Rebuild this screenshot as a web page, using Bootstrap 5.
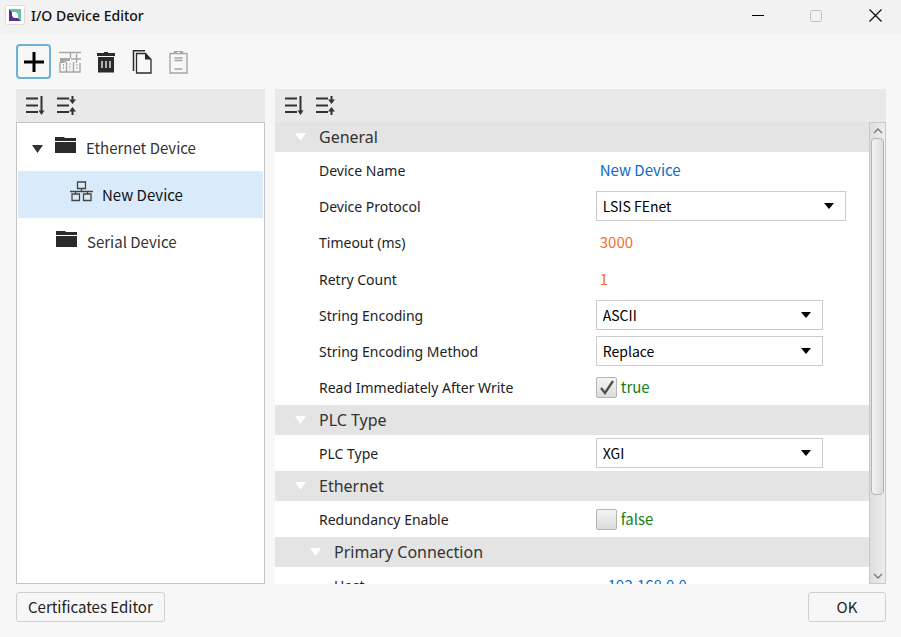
<!DOCTYPE html>
<html lang="en">
<head>
<meta charset="utf-8">
<meta name="viewport" content="width=device-width, initial-scale=1">
<title>I/O Device Editor</title>
<link href="https://cdn.jsdelivr.net/npm/bootstrap@5.3.0/dist/css/bootstrap.min.css" rel="stylesheet">
<style>
:root { --ui: "Noto Sans", "Open Sans", sans-serif; --cjk: "Noto Sans CJK KR", "Noto Sans", sans-serif; }
body { background: #f7f7f7; color: #222; font-family: var(--cjk); font-size: 15px; line-height: 20px; }
svg { display: block; }
.titlebar { background: #f2f2f2; height: 34px; padding: 0 0 3px 5px; }
.titlebar h1 { font-family: var(--ui); font-size: 14px; line-height: 20px; color: #111; }
.brand { gap: 5px; }
.win-btn { width: 58px; height: 31px; padding: 0; border: 0; background: none; display: flex; align-items: center; justify-content: center; }
.win-btn:last-child { width: 56px; padding-left: 4px; }
.tool-btn { width: 36px; height: 36px; padding: 0; border: 2px solid transparent; border-radius: 4px; background: none; display: flex; align-items: center; justify-content: center; }
.tool-btn.active-tool { border-color: #6fb0d6; width: 35px; height: 35px; margin-right: 1px; }
.tools { padding: 10px 16px 9px; height: 55px; }
.editor { display: grid; grid-template-columns: 249px minmax(0, 1fr); gap: 10px; padding: 0 15px 0 16px; min-height: 0; }
.pane { min-height: 0; min-width: 0; }
.pane-head { background: #e9e9e9; height: 33px; padding: 1px 0 0 8px; gap: 9px; flex-shrink: 0; }
.pane-head button { border: 0; padding: 0; background: none; }
.tree { border: 1px solid #c4c4c4; background: #fff; padding: 1px; }
.tree button { width: 100%; height: 47px; border: 0; background: none; text-align: left; display: flex; align-items: center; color: #333; padding: 0; }
.tree .picked { background: #d9ebfb; color: #111; }
.tree svg { flex-shrink: 0; }
.lvl-1 > svg { margin-right: 10px; margin-bottom: 4px; }
.tree .lvl-1 > .twist { margin: 3px 12px 0 0; }
.tree .lvl-1 { padding-left: 14px; }
.tree .leaf { padding-left: 38px; }
.tree .lvl-2 { padding-left: 52px; }
.lvl-2 > svg { margin-right: 9px; margin-bottom: 6px; }
.props { background: #fff; overflow: hidden; min-width: 0; font-family: var(--ui); font-size: 14px; }
.group-head { background: #e4e4e4; height: 30px; border: 0; width: 100%; padding: 0 0 0 20px; text-align: left; display: flex; align-items: center; gap: 13px; color: #333; font-size: 16px; line-height: 24px; }
.group-head.sub { padding-left: 35px; }
.prop { display: grid; grid-template-columns: 54% 1fr; align-items: center; height: 36px; }
.num-row + .num-row { height: 37px; }
.prop > label { padding: 2px 0 0 44px; }
.prop.sub > label { padding-left: 59px; }
.prop > :last-child { font-family: var(--cjk); font-size: 15px; }
.prop input[type=text] { border: 0; background: none; padding: 0 4px; width: 100%; outline: 0; }
.prop.sub input[type=text] { padding-left: 12px; }
.txt-value { color: #0b6bc9; }
.num-value { color: #f0712c; }
.bool-value { color: #158015; gap: 4px; }
.prop > .form-select { width: 227px; height: 30px; border: 1px solid #ccc; border-radius: 0; padding: 0 30px 0 6px; line-height: 20px; color: #000; font-size: 14px;
  background: #fff url("data:image/svg+xml,%3Csvg xmlns='http://www.w3.org/2000/svg' viewBox='0 0 10 6'%3E%3Cpath d='M0 0h10L5 6z'/%3E%3C/svg%3E") no-repeat right 11px center / 10px 6px; }
.prop > .form-select.wide { width: 250px; }
.tick { appearance: none; margin: 0; width: 21px; height: 21px; border: 1px solid #b5b5b5; border-radius: 2px; background: linear-gradient(#f4f4f4, #dcdcdc); }
.tick:checked { background: url("data:image/svg+xml,%3Csvg xmlns='http://www.w3.org/2000/svg' viewBox='0 0 19 19'%3E%3Cpath d='M4 10l4 5L16 3' fill='none' stroke='%23505050' stroke-width='2.3'/%3E%3C/svg%3E"), linear-gradient(#f4f4f4, #dcdcdc); }
.scroller { width: 17px; flex-shrink: 0; background: linear-gradient(90deg, #dedede, #eee); border: 1px solid #c8c8c8; padding: 0 1px; }
.scroller button { border: 0; background: none; padding: 0; height: 15px; width: 100%; display: flex; align-items: center; justify-content: center; }
.thumb { border: 1px solid #b4b4b4; border-radius: 4px; background: linear-gradient(90deg, #f2f2f2, #dcdcdc); }
.foot { padding: 8px 15px 15px 16px; }
.foot-btn { height: 30px; border: 1px solid #d0d0d0; border-radius: 3px; background: #f7f7f7; padding: 0 11px; color: #222; }
.foot-btn.ok { width: 78px; }
</style>
<script src="https://cdn.jsdelivr.net/npm/bootstrap@5.3.0/dist/js/bootstrap.bundle.min.js"></script>
</head>
<body class="vh-100 d-flex flex-column overflow-hidden">
<svg class="d-none" aria-hidden="true">
  <symbol id="expand" viewBox="0 0 20 20"><path d="M1 2.5h12M1 9.5h12M1 16h12M16.5 0v15" fill="none" stroke="#333" stroke-width="2"/><path d="M13.5 14.5h6l-3 4.500z" fill="#333"/></symbol>
  <symbol id="collapse" viewBox="0 0 20 20"><path d="M1 2.500h12M1 9.500h12M1 16h12M16.500 0v5M16.500 13v6" fill="none" stroke="#333" stroke-width="2"/><path d="M13 3.500h7l-3.500 4.500zM13 15.500h7l-3.500-4.500z" fill="#333"/></symbol>
  <symbol id="folder" viewBox="0 0 21 17"><path d="M0 0h9l1 1h11v3H0zM0 5h21v11H0z" fill="#2a2a2a"/></symbol>
  <symbol id="down" viewBox="0 0 11 8"><path d="M0 0h11L5.500 8z" fill="currentColor"/></symbol>
</svg>

<header class="titlebar d-flex align-items-center justify-content-between flex-shrink-0">
  <div class="brand d-flex align-items-center">
    <svg width="21" height="21" viewBox="0 0 21 21"><rect x=".5" y=".5" width="19" height="19" rx="2" fill="#fff" stroke="#dcdcdc"/><path d="M4 4h12v12l-3-3V9l-2-2H7z" fill="#62c99b"/><path d="M4 4v12h12l-3-3H9l-2-2V7z" fill="#5f2c96"/></svg>
    <h1 class="m-0">I/O Device Editor</h1>
  </div>
  <div class="d-flex">
    <button class="win-btn" aria-label="Minimize"><svg width="12" height="12"><path d="M0 5.500h12" stroke="#000"/></svg></button>
    <button class="win-btn" aria-label="Maximize" disabled><svg width="12" height="12"><rect x=".5" y=".5" width="11" height="11" rx="1" fill="none" stroke="#c0c0c0"/></svg></button>
    <button class="win-btn" aria-label="Close"><svg width="13" height="13"><path d="M.5.5l12 12M12.500.5l-12 12" stroke="#111" stroke-width="1.300"/></svg></button>
  </div>
</header>

<div class="tools d-flex align-items-start flex-shrink-0" role="toolbar" aria-label="Device actions">
  <button class="tool-btn active-tool" aria-label="Add"><svg width="20" height="20"><path d="M10 0v20M0 10h20" stroke="#000" stroke-width="3"/></svg></button>
  <button class="tool-btn" aria-label="Add group" disabled><svg width="22" height="22" viewBox="0 0 22 22"><path d="M0 1.500h22M11.500 1v6M1 11v10h20V12M7.500 11v10M14.500 11v10M17.500 3v9M12 8h10" fill="none" stroke="#a6a6a6" stroke-width="1.400"/><path d="M1 7h10v3H8l-3 2H1z" fill="#a6a6a6"/><path d="M4.500 13v6M11 12v7M18 13v6" stroke="#a6a6a6" stroke-dasharray="2 1"/></svg></button>
  <button class="tool-btn" aria-label="Delete"><svg width="18" height="22" viewBox="0 0 18 22"><path d="M0 2h7V1h4v1h7v3H0zM1 6h16v15.500H1z" fill="#2a2a2a"/><path d="M5 10v7M9 10v7M13 10v7" stroke="#ddd" stroke-width="1.500"/></svg></button>
  <button class="tool-btn" aria-label="Copy"><svg width="21" height="24" viewBox="0 0 21 24"><path d="M1.500 21V.8H13" fill="none" stroke="#2a2a2a" stroke-width="1.500"/><path d="M4.500 3.500h9l5.500 6v13.500H4.500z" fill="none" stroke="#2a2a2a" stroke-width="1.300"/><path d="M13 3l6.500 6.500H13z" fill="#2a2a2a"/></svg></button>
  <button class="tool-btn" aria-label="Paste" disabled><svg width="19" height="23" viewBox="0 0 19 23"><path d="M1 2.500h17v19.500H1zM5.500 7h8M5.500 9.500h8M5.500 18h8" fill="none" stroke="#a6a6a6" stroke-width="1.400"/><path d="M5 0h9v3H5z" fill="#a6a6a6"/><path d="M8 1.500h3" stroke="#f7f7f7"/></svg></button>
</div>

<main class="editor flex-fill">
  <section class="pane d-flex flex-column">
    <div class="pane-head d-flex align-items-center">
      <button aria-label="Expand all"><svg width="22" height="20"><use href="#expand"/></svg></button>
      <button aria-label="Collapse all"><svg width="22" height="20"><use href="#collapse"/></svg></button>
    </div>
    <nav class="tree flex-fill" aria-label="Devices">
      <button class="lvl-1"><svg class="twist" width="11" height="8"><use href="#down"/></svg><svg width="21" height="17"><use href="#folder"/></svg>Ethernet Device</button>
      <button class="lvl-2 picked"><svg width="23" height="21" viewBox="0 0 23 21"><path d="M7.500 1h8v6.500h-8zM11.500 7.500v3M0 10.500h23M5.500 10.500V13M17.500 10.500V13M2 13h7.500v6.500H2zM13.500 13H21v6.500h-7.500z" fill="none" stroke="#444" stroke-width="1.300"/></svg>New Device</button>
      <button class="lvl-1 leaf"><svg width="21" height="17"><use href="#folder"/></svg>Serial Device</button>
    </nav>
  </section>

  <section class="pane d-flex flex-column">
    <div class="pane-head d-flex align-items-center">
      <button aria-label="Expand all"><svg width="22" height="20"><use href="#expand"/></svg></button>
      <button aria-label="Collapse all"><svg width="22" height="20"><use href="#collapse"/></svg></button>
    </div>
    <div class="d-flex flex-fill pane">
      <form class="props flex-fill">
        <button type="button" class="group-head"><svg class="text-white" width="11" height="8"><use href="#down"/></svg>General</button>
        <div class="prop"><label for="name">Device Name</label><input type="text" class="txt-value" id="name" value="New Device"></div>
        <div class="prop"><label for="protocol">Device Protocol</label><select class="form-select wide" id="protocol"><option>LSIS FEnet</option></select></div>
        <div class="prop num-row"><label for="timeout">Timeout (ms)</label><input type="text" class="num-value" id="timeout" value="3000"></div>
        <div class="prop num-row"><label for="retry">Retry Count</label><input type="text" class="num-value" id="retry" value="1"></div>
        <div class="prop"><label for="encoding">String Encoding</label><select class="form-select" id="encoding"><option>ASCII</option></select></div>
        <div class="prop"><label for="method">String Encoding Method</label><select class="form-select" id="method"><option>Replace</option></select></div>
        <div class="prop"><label for="readback">Read Immediately After Write</label><div class="bool-value d-flex align-items-center"><input type="checkbox" class="tick" id="readback" checked>true</div></div>
        <button type="button" class="group-head"><svg class="text-white" width="11" height="8"><use href="#down"/></svg>PLC Type</button>
        <div class="prop"><label for="plc">PLC Type</label><select class="form-select" id="plc"><option>XGI</option></select></div>
        <button type="button" class="group-head"><svg class="text-white" width="11" height="8"><use href="#down"/></svg>Ethernet</button>
        <div class="prop"><label for="redundancy">Redundancy Enable</label><div class="bool-value d-flex align-items-center"><input type="checkbox" class="tick" id="redundancy">false</div></div>
        <button type="button" class="group-head sub"><svg class="text-white" width="11" height="8"><use href="#down"/></svg>Primary Connection</button>
        <div class="prop sub"><label for="host">Host</label><input type="text" class="txt-value" id="host" value="192.168.0.0"></div>
      </form>
      <div class="scroller d-flex flex-column">
        <button aria-label="Scroll up"><svg width="10" height="6"><path d="M1 5l4-4 4 4" fill="none" stroke="#777" stroke-width="1.300"/></svg></button>
        <div class="flex-fill"><div class="thumb" style="height:83%"></div></div>
        <button aria-label="Scroll down"><svg width="10" height="6"><path d="M1 1l4 4 4-4" fill="none" stroke="#777" stroke-width="1.300"/></svg></button>
      </div>
    </div>
  </section>
</main>

<footer class="foot d-flex justify-content-between flex-shrink-0">
  <button class="foot-btn">Certificates Editor</button>
  <button class="foot-btn ok">OK</button>
</footer>
</body>
</html>
